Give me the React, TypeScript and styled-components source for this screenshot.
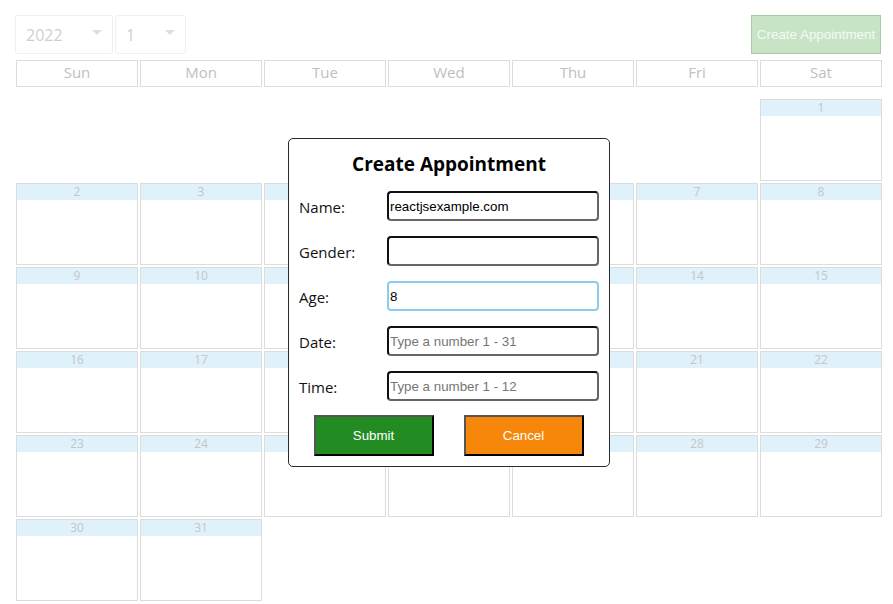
import styled, { createGlobalStyle } from "styled-components"

const GlobalStyle = createGlobalStyle`
    html, body{
        margin: 0;
        padding: 0;
        background: #fff;
        font-family: "Open Sans", "Noto Sans", sans-serif;
    }
`

const WEEKDAYS = ["Sun", "Mon", "Tue", "Wed", "Thu", "Fri", "Sat"]

const buildMonth = (year: number, month: number) => {
    const first = new Date(year, month - 1, 1).getDay()
    const days = new Date(year, month, 0).getDate()
    const cells: (number | null)[] = []
    for (let i = 0; i < first; i++) cells.push(null)
    for (let d = 1; d <= days; d++) cells.push(d)
    return cells
}

const FIELDS = [
    { label: "Name:", value: "reactjsexample.com", placeholder: "" },
    { label: "Gender:", value: "", placeholder: "" },
    { label: "Age:", value: "8", placeholder: "", focused: true },
    { label: "Date:", value: "", placeholder: "Type a number 1 - 31" },
    { label: "Time:", value: "", placeholder: "Type a number 1 - 12" },
]

const App = () => {
    const cells = buildMonth(2022, 1)

    return <Page>
        <GlobalStyle />
        <TopBar>
            <Selects>
                <Select $width={98}>2022<Caret /></Select>
                <Select $width={71}>1<Caret /></Select>
            </Selects>
            <CreateButton>Create Appointment</CreateButton>
        </TopBar>
        <WeekHeader>
            {WEEKDAYS.map(d => <WeekDay key={d}>{d}</WeekDay>)}
        </WeekHeader>
        <DaysGrid>
            {cells.map((d, i) => d === null
                ? <Blank key={`b${i}`} />
                : <Day key={d}>
                    <DayNumber>{d}</DayNumber>
                </Day>
            )}
        </DaysGrid>

        <Modal>
            <ModalTitle>Create Appointment</ModalTitle>
            <Form onSubmit={e => e.preventDefault()}>
                {FIELDS.map(f => <FieldRow key={f.label}>
                    <Label>{f.label}</Label>
                    <Input type="text" defaultValue={f.value} placeholder={f.placeholder} $focused={f.focused} />
                </FieldRow>)}
                <Actions>
                    <ActionButton type="submit" $color="#228b22">Submit</ActionButton>
                    <ActionButton type="button" $color="#f6870a">Cancel</ActionButton>
                </Actions>
            </Form>
        </Modal>
    </Page>
}

const Page = styled.div`
    position: relative;
    width: 893px;
    height: 604px;
    box-sizing: border-box;
    padding: 15px 0 0 15px;
    overflow: hidden;
`

const TopBar = styled.div`
    display: flex;
    justify-content: space-between;
    align-items: flex-start;
    width: 866px;
    height: 39px;
`

const Selects = styled.div`
    display: flex;
    gap: 2px;
`

const Select = styled.div<{ $width: number }>`
    width: ${p => p.$width}px;
    height: 39px;
    box-sizing: border-box;
    border: 1px solid #efefef;
    border-radius: 3px;
    padding: 0 10px;
    display: flex;
    align-items: center;
    justify-content: space-between;
    font-size: 16px;
    color: #cfcfcf;
`

const Caret = styled.span`
    width: 0;
    height: 0;
    border-left: 5px solid transparent;
    border-right: 5px solid transparent;
    border-top: 5px solid #dedede;
    margin-top: -4px;
`

const CreateButton = styled.button`
    width: 130px;
    height: 39px;
    background: #c8e4c6;
    border: 1px solid #a9c9a6;
    color: #f4fbf3;
    font-family: "Liberation Sans", Arial, sans-serif;
    font-size: 13.4px;
    padding: 0;
    cursor: pointer;
`

const WeekHeader = styled.div`
    display: grid;
    grid-template-columns: repeat(7, 122px);
    gap: 2px;
    margin: 6px 0 0 1px;
`

const WeekDay = styled.div`
    height: 27px;
    box-sizing: border-box;
    border: 1px solid #dcdcdc;
    padding-bottom: 3px;
    display: flex;
    align-items: center;
    justify-content: center;
    font-size: 15px;
    color: #c0c0c0;
`

const DaysGrid = styled.div`
    display: grid;
    grid-template-columns: repeat(7, 122px);
    grid-auto-rows: 82px;
    gap: 2px;
    margin: 12px 0 0 1px;
`

const Blank = styled.div``

const Day = styled.div`
    box-sizing: border-box;
    border: 1px solid #dcdcdc;
`

const DayNumber = styled.div`
    height: 16px;
    line-height: 16px;
    background: #dff1fa;
    text-align: center;
    font-size: 12px;
    color: #c6c6c6;
`

const Modal = styled.div`
    position: absolute;
    left: 288px;
    top: 138px;
    width: 322px;
    height: 329px;
    box-sizing: border-box;
    background: #fff;
    border: 1px solid #2b2b2b;
    border-radius: 5px;
    padding: 10px;
    display: flex;
    flex-direction: column;
`

const ModalTitle = styled.h2`
    margin: 0;
    height: 33px;
    line-height: 30px;
    text-align: center;
    font-size: 19px;
    font-weight: 700;
    color: #000;
`

const Form = styled.form`
    display: flex;
    flex-direction: column;
    gap: 15px;
    margin-top: 9px;
`

const FieldRow = styled.div`
    display: flex;
    align-items: center;
    height: 30px;
`

const Label = styled.label`
    width: 88px;
    flex: none;
    font-size: 15px;
    color: #111;
    padding-top: 2px;
`

const Input = styled.input<{ $focused?: boolean }>`
    width: 212px;
    height: 30px;
    box-sizing: border-box;
    padding: 0 1px;
    border: 2px solid ${p => p.$focused ? "#87ceeb" : "#666"};
    border-style: ${p => p.$focused ? "solid" : "inset"};
    border-radius: 4px;
    font-family: "Liberation Sans", Arial, sans-serif;
    font-size: 13.333px;
    color: #000;
    outline: none;
    &::placeholder{
        color: #767676;
    }
`

const Actions = styled.div`
    display: flex;
    justify-content: center;
    gap: 30px;
    margin-top: -1px;
    margin-left: -1px;
`

const ActionButton = styled.button<{ $color: string }>`
    width: 120px;
    height: 41px;
    background: ${p => p.$color};
    border: 2px outset #555;
    color: #fff;
    font-family: "Liberation Sans", Arial, sans-serif;
    font-size: 13.333px;
    cursor: pointer;
`

export default App
